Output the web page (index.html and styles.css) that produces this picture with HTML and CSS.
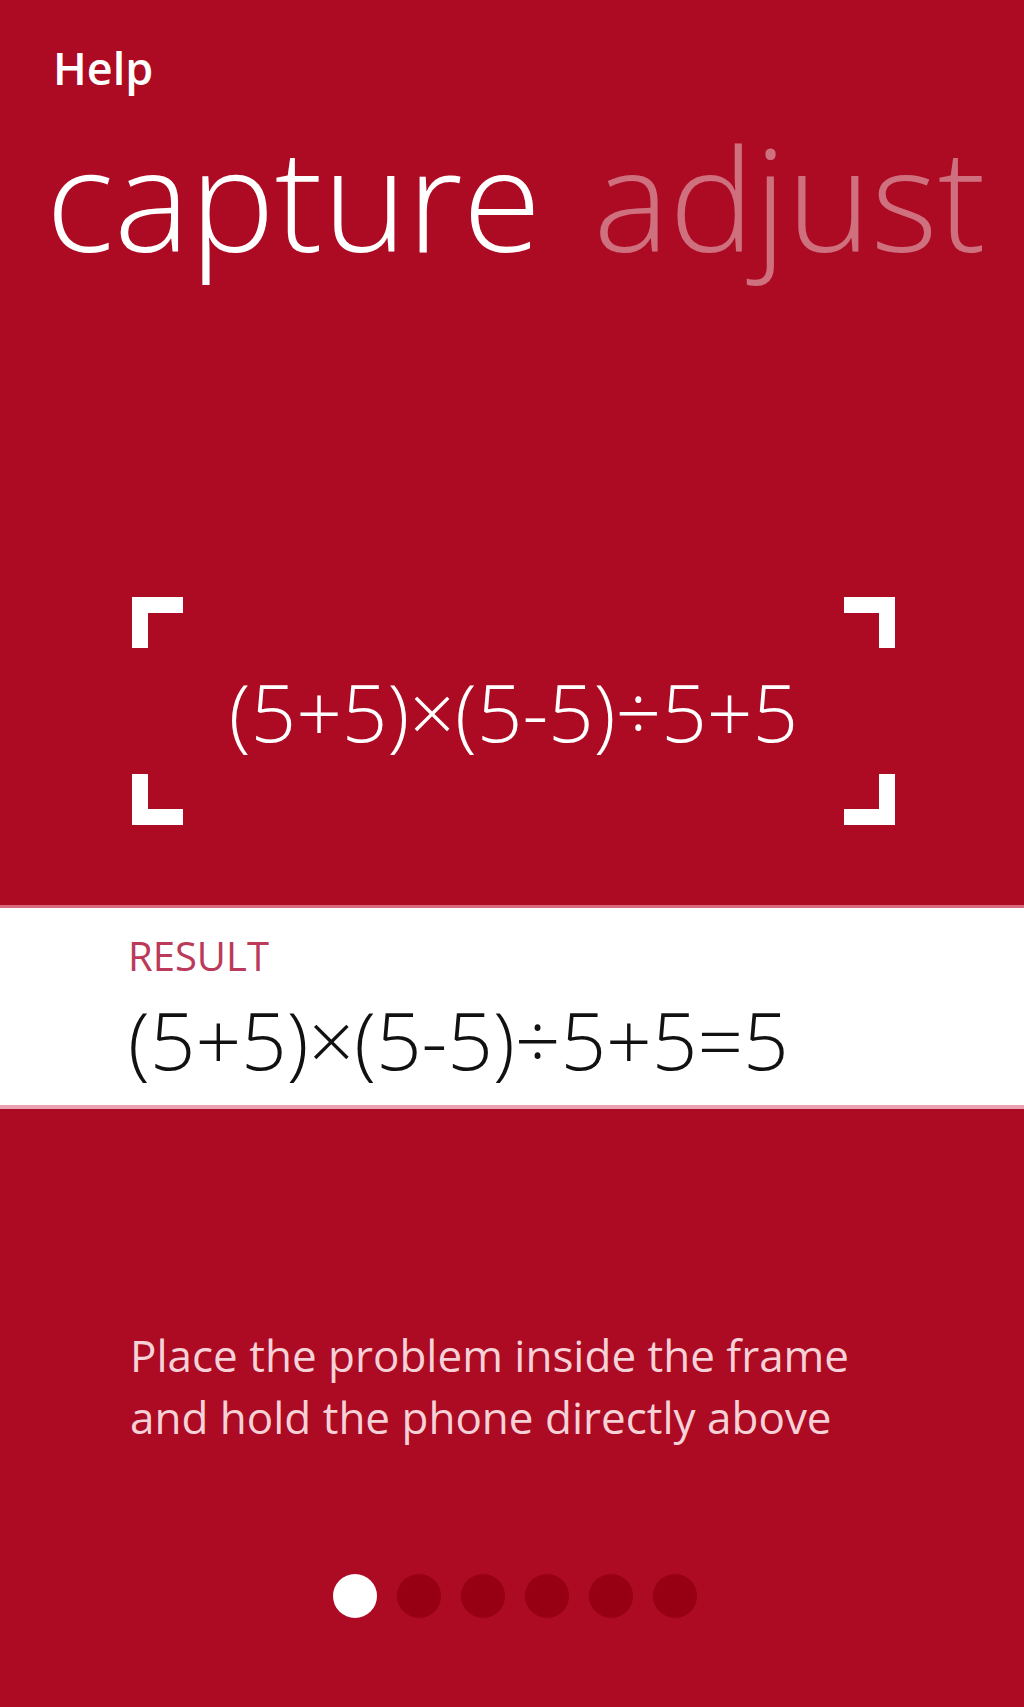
FILE: index.html
```html
<!DOCTYPE html>
<html lang="en">
<head>
<meta charset="utf-8">
<title>Help - capture</title>
<link rel="stylesheet" href="styles.css">
</head>
<body>
<div class="screen">
  <header class="top">
    <div class="app">Help</div>
    <h1 class="pivot"><span class="on">capture</span> <span class="off">adjust</span></h1>
  </header>
  <section class="frame">
    <span class="corner tl"></span>
    <span class="corner tr"></span>
    <span class="corner bl"></span>
    <span class="corner br"></span>
    <div class="expr">(5+5)×(5-5)÷5+5</div>
  </section>
  <section class="result">
    <div class="label">RESULT</div>
    <div class="answer">(5+5)×(5-5)÷5+5=5</div>
  </section>
  <p class="hint">Place the problem inside the frame<br>and hold the phone directly above</p>
  <nav class="dots">
    <span class="dot active"></span>
    <span class="dot"></span>
    <span class="dot"></span>
    <span class="dot"></span>
    <span class="dot"></span>
    <span class="dot"></span>
  </nav>
</div>
</body>
</html>
```
FILE: styles.css
```css
html, body {
  margin: 0;
  padding: 0;
  background: #ad0a23;
}
.screen {
  width: 1024px;
  height: 1707px;
  background: #ad0a23;
  font-family: "Open Sans", "Noto Sans", sans-serif;
  color: #ffffff;
  display: flex;
  flex-direction: column;
  overflow: hidden;
}
.top {
  padding-top: 42px;
}
.app {
  padding-left: 53px;
  font-size: 45px;
  line-height: 52px;
  font-weight: 600;
  height: 52px;
}
.pivot {
  margin: 23px 0 0 0;
  padding-left: 46px;
  font-size: 143px;
  line-height: 160px;
  height: 160px;
  font-weight: 300;
  word-spacing: 15px;
  white-space: nowrap;
}
.pivot .off {
  color: rgba(255, 255, 255, 0.42);
}
.frame {
  position: relative;
  margin: 320px 0 0 132px;
  width: 763px;
  height: 228px;
  display: flex;
  align-items: center;
  justify-content: center;
}
.corner {
  position: absolute;
  width: 51px;
  height: 51px;
  border: 0 solid #ffffff;
  box-sizing: border-box;
}
.corner.tl { left: 0; top: 0; border-top-width: 16px; border-left-width: 16px; }
.corner.tr { right: 0; top: 0; border-top-width: 16px; border-right-width: 16px; }
.corner.bl { left: 0; bottom: 0; border-bottom-width: 16px; border-left-width: 16px; }
.corner.br { right: 0; bottom: 0; border-bottom-width: 16px; border-right-width: 16px; }
.expr {
  font-size: 80px;
  line-height: 100px;
  font-weight: 300;
  white-space: nowrap;
}
.result {
  margin-top: 80px;
  background: #ffffff;
  border-top: 3px solid #d86a7b;
  border-bottom: 4px solid #eaa2b0;
  padding: 24px 0 16px 128px;
}
.label {
  font-size: 40px;
  line-height: 48px;
  color: #bb3a5a;
}
.answer {
  margin-top: 9px;
  font-size: 80px;
  line-height: 100px;
  font-weight: 300;
  color: #111111;
  white-space: nowrap;
}
.hint {
  margin: 215px 0 0 0;
  padding-left: 130px;
  font-size: 44px;
  line-height: 62px;
  color: #f6d2d8;
}
.dots {
  margin-top: 126px;
  display: flex;
  justify-content: center;
  gap: 20px;
  padding-left: 6px;
}
.dot {
  width: 44px;
  height: 44px;
  border-radius: 50%;
  background: #970012;
}
.dot.active {
  background: #ffffff;
}
```
